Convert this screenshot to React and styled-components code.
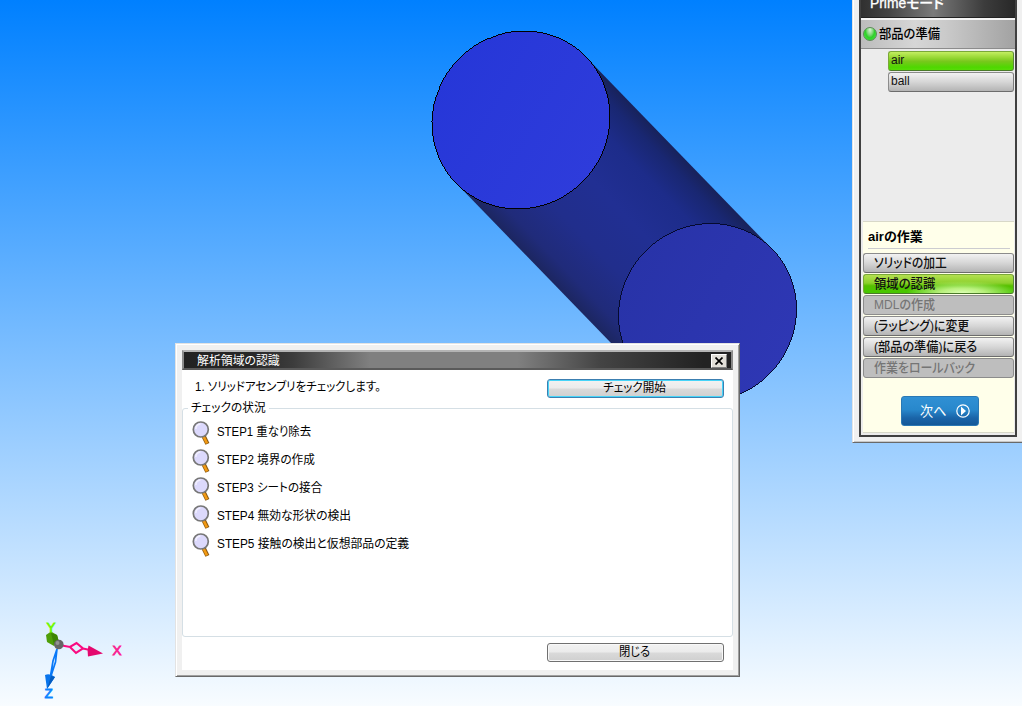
import React from "react";
import styled, { createGlobalStyle, css } from "styled-components";

const Global = createGlobalStyle`
  * { box-sizing: border-box; }
  html, body { margin: 0; overflow: hidden; }
  body {
    font-family: "Liberation Sans", "Noto Sans CJK JP", sans-serif;
    font-feature-settings: "palt";
    font-size: 12px;
    line-height: 14px;
    color: #000;
  }
`;

const Viewport = styled.main`
  position: relative;
  width: 1022px;
  height: 706px;
  overflow: hidden;
  background: linear-gradient(#0080ff, #f8fcff);
`;

const Scene = styled.svg`
  display: block;
  width: 1022px;
  height: 706px;
`;

const Label = styled.span`
  display: inline-block;
  white-space: nowrap;
  transform: scaleX(${(p) => p.$sx || 1});
  transform-origin: ${(p) => p.$origin || "left"} center;
`;

/* ---------- dialog ---------- */

const DialogWindow = styled.section`
  position: absolute;
  left: 175px;
  top: 343px;
  width: 565px;
  height: 334px;
  padding: 5px 6px 6px 5px;
  background: #f0f0f0;
  border: 1px solid;
  border-color: #e3e3e3 #696969 #696969 #e3e3e3;
  box-shadow: inset 1px 1px #fff, inset -1px -1px #a0a0a0;
  display: flex;
  flex-direction: column;
`;

const TitleBar = styled.header`
  height: 20px;
  margin: 1px 0 0 1px;
  flex: none;
  display: flex;
  align-items: center;
  justify-content: space-between;
  padding: 1px 4px 0 13px;
  border: 2px solid;
  border-color: #b4b4b4 #8a8a8a #5a5a5a #8c8c8c;
  color: #fff;
  background: linear-gradient(90deg, #222 0, #262626 12%, #3c3c3c 20%, #808080 34%, #808080 61%, #444 76%, #222 95%);
`;

const CloseBox = styled.button`
  width: 16px;
  height: 14px;
  padding: 0;
  display: grid;
  place-items: center;
  border: 1px solid;
  border-color: #fff #808080 #808080 #fff;
  background: #e2dfd8;
`;

const DialogBody = styled.div`
  flex: 1;
  margin-left: 1px;
  background: #fff;
  display: flex;
  flex-direction: column;
`;

const ActionRow = styled.div`
  height: ${(p) => p.$h}px;
  padding: ${(p) => p.$top}px 9px 0 13px;
  display: flex;
  justify-content: space-between;
  align-items: flex-start;
`;

const Instruction = styled.div`
  padding-top: 1px;
`;

const PushButton = styled.button`
  width: 177px;
  height: 19px;
  padding: 0 2px 1px 0;
  margin-left: auto;
  font: inherit;
  line-height: 14px;
  color: #000;
  border-radius: 3px;
  border: 1px solid ${(p) => (p.$focused ? "#3c7fb1" : "#707070")};
  box-shadow: inset 0 0 0 1px ${(p) => (p.$focused ? "#46d4f8" : "#f8f8f8")};
  background: linear-gradient(#f2f2f2, #ebebeb 48%, #dadada 52%, #cfcfcf);
`;

const StatusGroup = styled.fieldset`
  margin: 0;
  min-width: 0;
  height: 237px;
  padding: 2px 9px 0;
  border: 1px solid #d5dfe5;
  border-radius: 3px;
`;

const GroupTitle = styled.legend`
  height: 16px;
  line-height: 16px;
  margin-left: -4px;
  padding: 0 3px;
  width: 81px;
`;

const StepList = styled.ol`
  list-style: none;
  margin: 0;
  padding: 0;
`;

const Step = styled.li`
  height: 28px;
  display: flex;
  align-items: center;
  gap: 6px;
`;

const MagnifierSvg = styled.svg`
  width: 19px;
  height: 25px;
  flex: none;
`;

function Magnifier() {
  return (
    <MagnifierSvg viewBox="0 0 19 25">
      <path d="M11.800 16.500l3.600 7.400" stroke="#8a5a14" strokeWidth="4.400" />
      <path d="M11.600 16.500l3.400 6.800" stroke="#f39a12" strokeWidth="2.600" />
      <circle cx="8.800" cy="9.500" r="7.500" fill="#dcd9fc" stroke="#777" strokeWidth="1.700" />
      <path d="M3.800 9a5.200 5.200 0 0 1 4.600-5" fill="none" stroke="#f2f0ff" strokeWidth="1.600" />
    </MagnifierSvg>
  );
}

/* ---------- side panel ---------- */

const SideWindow = styled.aside`
  position: absolute;
  left: 852px;
  top: -8px;
  width: 180px;
  height: 451px;
  padding: 0 0 6px 5px;
  background: #f0f0f0;
  border: solid;
  border-width: 0 0 1px 1px;
  border-color: #696969 #696969 #696969 #e3e3e3;
  box-shadow: inset 1px 0 #fff, inset 0 -1px #c8c8c8;
`;

const PanelFrame = styled.div`
  width: 158px;
  height: 445px;
  margin-left: 1px;
  border: 2px solid #404040;
  background: #ececec;
  display: flex;
  flex-direction: column;
`;

const ModeHeader = styled.h1`
  margin: 0;
  height: 24px;
  flex: none;
  padding: 2px 0 0 9px;
  font-size: 14px;
  line-height: 14px;
  color: #fff;
  font-weight: 500;
  -webkit-text-stroke: 0.3px #fff;
  background: linear-gradient(90deg, #303030, #444 18%, #7a7a7a 47%, #6a6a6a 55%, #3c3c3c 80%, #282828);
  border-bottom: 1px solid #222;
`;

const PartsHeader = styled.h2`
  margin: 0;
  height: 31px;
  flex: none;
  display: flex;
  align-items: center;
  gap: 2px;
  padding: 0 0 0 2px;
  font-size: 13px;
  font-weight: 500;
  border-top: 2px solid #f4f4f4;
  border-bottom: 1px solid #8c8c8c;
  background: linear-gradient(90deg, #bcbcbc, #d6d6d6 35%, #cacaca 55%, #a2a2a2);
`;

const Lamp = styled.i`
  width: 14px;
  height: 14px;
  border-radius: 50%;
  border: 1px solid #5c8a58;
  background: radial-gradient(ellipse at 50% 15%, #d8f5d4 0, #7fd878 35%, #2fd02a 55%, #48f040 100%);
`;

const PartList = styled.div`
  height: 172px;
  flex: none;
  padding: 2px 1px 0 27px;
  display: flex;
  flex-direction: column;
  gap: 1px;
`;

const tones = {
  plain: css`
    background: linear-gradient(#f2f2f2, #d6d6d6 50%, #b4b4b4);
    border-color: #8c8c8c #7c7c7c #6c6c6c #8c8c8c;
  `,
  active: css`
    background: linear-gradient(#c4ee62, #a0dc3c 25%, #78c81c 52%, #4ed800 85%, #58dc08);
    border-color: #7aa838 #5a8a3a #4a7a2a #7aa838;
  `,
  glossy: css`
    background:
      radial-gradient(ellipse 56px 12px at 66% 100%, #dcffb4, #b8f07c 40%, transparent),
      linear-gradient(#b4e050, #8cd02c 45%, #56c000 60%, #46c800);
    border-color: #7aa838 #5a8a3a #4a7a2a #7aa838;
  `,
  disabled: css`
    background: #bebebe;
    border-color: #8c8c8c;
    color: #757575;
  `,
};

const PanelButton = styled.button`
  height: 20px;
  width: 100%;
  flex: none;
  padding: ${(p) => (p.$part ? "0 0 2px 2px" : "0 0 1px 10px")};
  font: inherit;
  font-size: ${(p) => (p.$part ? 12 : 13)}px;
  font-weight: ${(p) => (p.$part ? 400 : 500)};
  line-height: 16px;
  text-align: left;
  color: #111;
  border: 1px solid;
  border-radius: 3px;
  ${(p) => tones[p.$tone || "plain"]}
`;

const WorkArea = styled.div`
  flex: 1;
  margin: 0 1px 2px 2px;
  background: #ffffea;
  border: 1px solid #d8d8c8;
  border-width: 1px 0 1px 0;
  display: flex;
  flex-direction: column;
`;

const WorkTitle = styled.h3`
  margin: 0 4px 4px 5px;
  height: 27px;
  line-height: 29px;
  font-size: 13px;
  font-weight: 700;
  border-bottom: 1px solid #ccccd0;
`;

const WorkButtons = styled.div`
  display: flex;
  flex-direction: column;
  gap: 1px;
`;

const NextButton = styled.button`
  width: 78px;
  height: 30px;
  margin: 18px 0 0 38px;
  padding: 0 8px 1px 18px;
  display: flex;
  align-items: center;
  justify-content: space-between;
  font: inherit;
  font-size: 14px;
  color: #fff;
  border: 1px solid #2a78b4;
  border-radius: 3px;
  background: linear-gradient(#3090d4, #2888cc 45%, #1a64a8 75%, #145898);
`;

const workButtons = [
  { text: "ソリッドの加工", sx: 0.905 },
  { text: "領域の認識", sx: 0.95, tone: "glossy" },
  { text: "MDLの作成", sx: 0.925, tone: "disabled" },
  { text: "(ラッピング)に変更", sx: 0.915 },
  { text: "(部品の準備)に戻る", sx: 0.935 },
  { text: "作業をロールバック", sx: 0.92, tone: "disabled" },
];

const steps = [
  { text: "STEP1 重なり除去", sx: 0.95 },
  { text: "STEP2 境界の作成", sx: 0.97 },
  { text: "STEP3 シートの接合", sx: 0.965 },
  { text: "STEP4 無効な形状の検出", sx: 0.98 },
  { text: "STEP5 接触の検出と仮想部品の定義", sx: 0.985 },
];

function Model() {
  return (
    <Scene viewBox="0 0 1022 706">
      <defs>
        <linearGradient id="side" gradientUnits="userSpaceOnUse" x1="456" y1="183" x2="586" y2="57">
          <stop offset="0" stopColor="#1c2660" />
          <stop offset="0.1" stopColor="#202b7a" />
          <stop offset="0.3" stopColor="#212e8c" />
          <stop offset="0.55" stopColor="#212f93" />
          <stop offset="0.78" stopColor="#1d2c8a" />
          <stop offset="0.92" stopColor="#192772" />
          <stop offset="1" stopColor="#18225a" />
        </linearGradient>
        <linearGradient id="cap" x1="0.3" y1="0" x2="0.6" y2="1">
          <stop offset="0" stopColor="#2637d8" />
          <stop offset="1" stopColor="#2e3cdb" />
        </linearGradient>
        <linearGradient id="cap2" x1="0.3" y1="0" x2="0.6" y2="1">
          <stop offset="0" stopColor="#2833a8" />
          <stop offset="1" stopColor="#2e37b4" />
        </linearGradient>
      </defs>
      <path d="M586 57L772.500 249.500L642.500 375.500L456 183Z" fill="url(#side)" />
      <ellipse cx="707.500" cy="312.500" rx="90.700" ry="87.300" transform="rotate(-45 707.5 312.5)" fill="url(#cap2)" stroke="#050a30" shapeRendering="crispEdges" />
      <ellipse cx="521" cy="120" rx="90.700" ry="87.300" transform="rotate(-45 521 120)" fill="url(#cap)" stroke="#000" shapeRendering="crispEdges" />

      <path d="M57 649L53 661L50.500 676M57 649L55.500 662L51 676" fill="none" stroke="#0878f8" strokeWidth="1.700" />
      <path d="M45 675q5-2 10 2l-8 12z" fill="#0874ec" />
      <path d="M55 677l-8 12 4-13z" fill="#045cc0" />
      <path d="M46 635l5-3.500 6 3.500 2 7-5 4-7-4z" fill="#4e9e08" />
      <path d="M51 633l6 2 2 7-5 3z" fill="#3c8404" />
      <path d="M62 645.500L70 647L76.500 643L83 648.500L76 653L70 647M83 648.500L90 650" fill="none" stroke="#fa0a80" strokeWidth="2.100" />
      <path d="M88.500 645.500L103 653.500L88 656.500q-1-6 .5-11z" fill="#e4086e" />
      <circle cx="58.800" cy="644.500" r="4.800" fill="#666" />
      <circle cx="57.500" cy="643" r="2" fill="#929292" />
      <g fontFamily="Liberation Sans, sans-serif" fontSize="13.500" textAnchor="middle" strokeWidth="0.800">
        <text x="117" y="655" fill="#fa2090" stroke="#fa2090">X</text>
        <text x="51" y="632" fill="#70f800" stroke="#70f800">Y</text>
        <text x="48.500" y="698" fill="#0a84ff" stroke="#0a84ff">Z</text>
      </g>
    </Scene>
  );
}

function Dialog() {
  return (
    <DialogWindow>
      <TitleBar>
        <Label $sx={0.99}>解析領域の認識</Label>
        <CloseBox aria-label="close">
          <svg width="8" height="8" viewBox="0 0 8 8">
            <path d="M0.500 0.500L7.500 7.500M7.500 0.500L0.500 7.500" stroke="#000" strokeWidth="1.700" />
          </svg>
        </CloseBox>
      </TitleBar>
      <DialogBody>
        <ActionRow $h={30} $top={9}>
          <Instruction><Label $sx={0.958}>1. ソリッドアセンブリをチェックします。</Label></Instruction>
          <PushButton $focused><Label $sx={0.965} $origin="center">チェック開始</Label></PushButton>
        </ActionRow>
        <StatusGroup>
          <GroupTitle><Label $sx={0.975}>チェックの状況</Label></GroupTitle>
          <StepList>
            {steps.map((s) => (
              <Step key={s.text}>
                <Magnifier />
                <Label $sx={s.sx}>{s.text}</Label>
              </Step>
            ))}
          </StepList>
        </StatusGroup>
        <ActionRow $h={33} $top={6}>
          <PushButton><Label $sx={0.94} $origin="center">閉じる</Label></PushButton>
        </ActionRow>
      </DialogBody>
    </DialogWindow>
  );
}

function SidePanel() {
  return (
    <SideWindow>
      <PanelFrame>
        <ModeHeader><Label $sx={0.99}>Primeモード</Label></ModeHeader>
        <PartsHeader><Lamp /><Label $sx={0.945}>部品の準備</Label></PartsHeader>
        <PartList>
          <PanelButton $part $tone="active"><Label>air</Label></PanelButton>
          <PanelButton $part><Label>ball</Label></PanelButton>
        </PartList>
        <WorkArea>
          <WorkTitle><Label>airの作業</Label></WorkTitle>
          <WorkButtons>
            {workButtons.map((b) => (
              <PanelButton key={b.text} $tone={b.tone}><Label $sx={b.sx}>{b.text}</Label></PanelButton>
            ))}
          </WorkButtons>
          <NextButton>
            <Label $sx={0.94}>次へ</Label>
            <svg width="14" height="14" viewBox="0 0 14 14">
              <circle cx="7" cy="7" r="6.200" fill="none" stroke="#fff" strokeWidth="1.200" />
              <path d="M5 2.500L10 7L5 11.500Z" fill="#fff" />
            </svg>
          </NextButton>
        </WorkArea>
      </PanelFrame>
    </SideWindow>
  );
}

export default function App() {
  return (
    <>
      <Global />
      <Viewport>
        <Model />
        <Dialog />
        <SidePanel />
      </Viewport>
    </>
  );
}
